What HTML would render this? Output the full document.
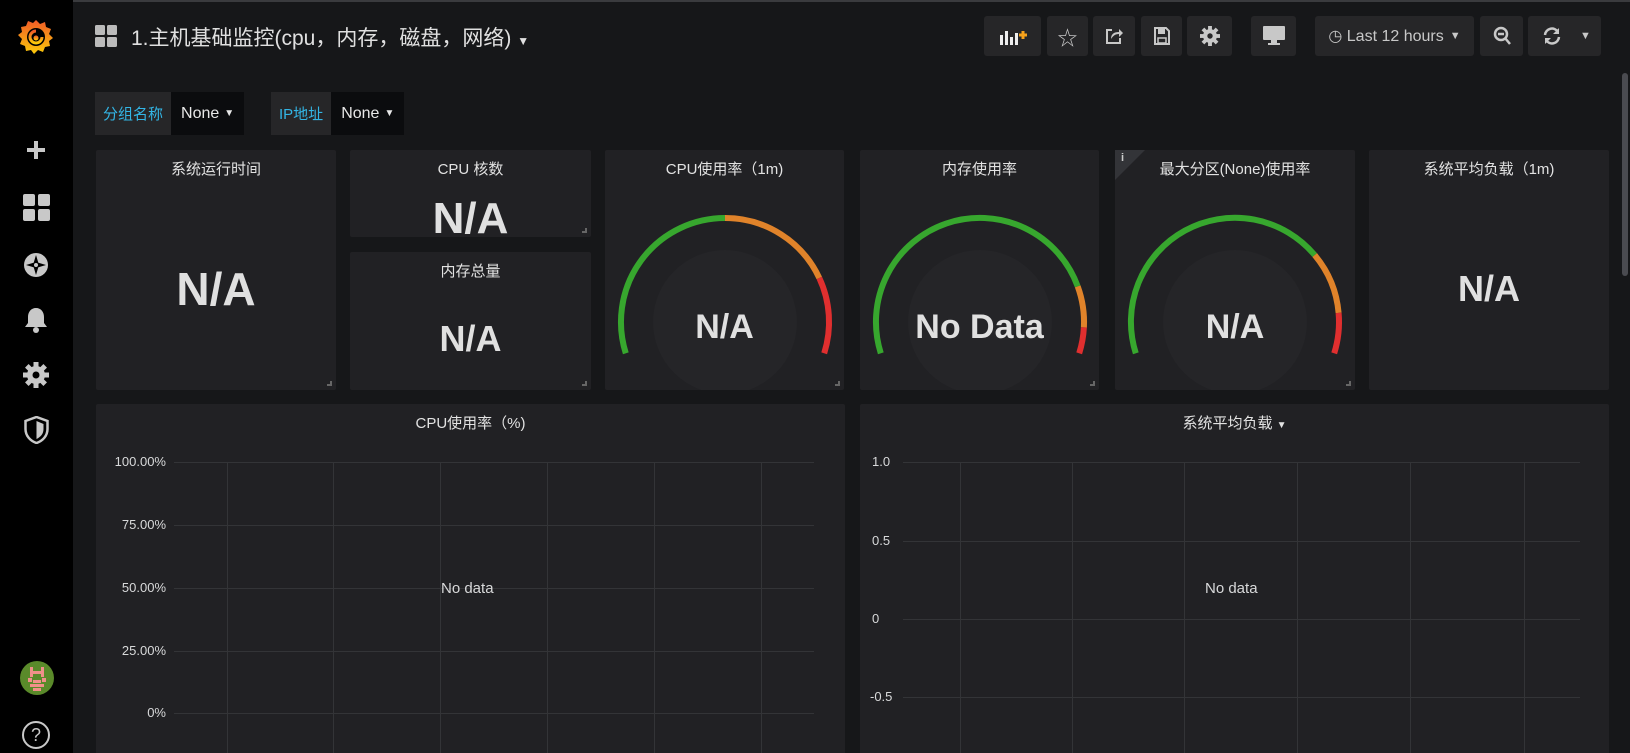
<!DOCTYPE html>
<html><head><meta charset="utf-8"><style>
*{box-sizing:border-box;margin:0;padding:0}
html,body{width:1630px;height:753px;overflow:hidden;background:#161719}
body{font-family:"Liberation Sans","Noto Sans CJK SC",sans-serif;color:#d8d9da;position:relative}
.abs{position:absolute}
.side{left:0;top:0;width:73px;height:753px;background:#000}
.btn{position:absolute;top:16px;height:40px;background:#262628;border-radius:3px;display:flex;align-items:center;justify-content:center;color:#c8c8c8;font-size:15px}
.panel{position:absolute;background:#212124;border-radius:2px}
.pt{position:absolute;left:0;right:0;top:8px;text-align:center;font-size:15px;color:#e2e2e2}
.big{position:absolute;left:0;right:0;text-align:center;font-weight:bold;color:#e0e0e0}
.corner{position:absolute;right:4px;bottom:4px;width:5px;height:5px;border-right:2px solid #666;border-bottom:2px solid #666}
.yl{position:absolute;font-size:13px;color:#d8d9da;text-align:right}
.hl{position:absolute;height:1px;background:#333437}
.vl{position:absolute;width:1px;background:#333437}
.var{position:absolute;top:92px;height:43px;display:flex;font-size:15px}
.var .l{background:#262628;color:#33b5e5;display:flex;align-items:center;padding:0 8px}
.var .v{background:#0b0c0e;color:#e8e8e8;display:flex;align-items:center;padding:0 10px;font-size:16px}
</style></head><body>
<div class="abs" style="left:0;top:0;width:1630px;height:2px;background:#3a3b3e"></div>
<div class="abs side">
 <svg class="abs" style="left:16px;top:17px" width="40" height="40" viewBox="0 0 40 40"><defs><linearGradient id="g" x1="0" y1="1" x2="0" y2="0"><stop offset="0" stop-color="#fbca0a"/><stop offset="1" stop-color="#f05a28"/></linearGradient></defs><path d="M20 3l4 4 5-2 1 5 5 2-2 5 4 4-4 3 1 5-5 1-2 5-5-2-4 4-3-4-5 1-1-5-5-2 2-5-4-4 4-3-1-5 5-1 2-5 5 2z" fill="url(#g)"/><circle cx="20" cy="20" r="9" fill="#000"/><path d="M20 14a6 6 0 1 0 6 6" stroke="url(#g)" stroke-width="3" fill="none"/><circle cx="20" cy="21" r="2.5" fill="url(#g)"/></svg>
 <div class="abs" style="left:26px;top:140px;width:20px;height:20px"><div class="abs" style="left:8px;top:1px;width:4px;height:18px;background:#c8c8c8"></div><div class="abs" style="left:1px;top:8px;width:18px;height:4px;background:#c8c8c8"></div></div>
 <svg class="abs" style="left:23px;top:194px" width="27" height="27"><rect x="0" y="0" width="12" height="12" rx="2" fill="#c8c8c8"/><rect x="15" y="0" width="12" height="12" rx="2" fill="#c8c8c8"/><rect x="0" y="15" width="12" height="12" rx="2" fill="#c8c8c8"/><rect x="15" y="15" width="12" height="12" rx="2" fill="#c8c8c8"/></svg>
 <svg class="abs" style="left:23px;top:252px" width="26" height="26"><circle cx="13" cy="13" r="12" fill="#c8c8c8"/><path d="M13 3l3 10-3 10-3-10z M3 13l10-3 10 3-10 3z" fill="#000"/><circle cx="13" cy="13" r="2" fill="#c8c8c8"/></svg>
 <svg class="abs" style="left:24px;top:306px" width="24" height="28"><path d="M12 2c-5 0-8 4-8 9v6l-3 4h22l-3-4v-6c0-5-3-9-8-9z" fill="#c8c8c8"/><circle cx="12" cy="24" r="3" fill="#c8c8c8"/></svg>
 <svg class="abs" style="left:23px;top:362px" width="26" height="26" viewBox="0 0 26 26"><g fill="#c8c8c8"><circle cx="13" cy="13" r="9"/><rect x="10.5" y="0" width="5" height="26"/><rect x="0" y="10.5" width="26" height="5"/><rect x="10.5" y="0" width="5" height="26" transform="rotate(45 13 13)"/><rect x="10.5" y="0" width="5" height="26" transform="rotate(-45 13 13)"/></g><circle cx="13" cy="13" r="3.5" fill="#000"/></svg>
 <svg class="abs" style="left:24px;top:416px" width="25" height="28"><path d="M12.5 1l11 4v8c0 7-5 12-11 14C6.5 25 1.5 20 1.5 13V5z" fill="none" stroke="#c8c8c8" stroke-width="2.5"/><path d="M12.5 5l7 3v5c0 5-3 8-7 10z" fill="#c8c8c8"/></svg>
 <svg class="abs" style="left:20px;top:661px" width="34" height="34" viewBox="0 0 34 34"><circle cx="17" cy="17" r="17" fill="#5a8a2a"/><g fill="#f0908a"><rect x="10" y="6" width="3" height="10"/><rect x="21" y="6" width="3" height="10"/><rect x="13" y="10" width="8" height="3"/><rect x="8" y="17" width="4" height="4"/><rect x="22" y="17" width="4" height="4"/><rect x="13" y="19" width="8" height="3"/><rect x="10" y="23" width="14" height="3"/><rect x="13" y="27" width="8" height="3"/></g></svg>
 <div class="abs" style="left:22px;top:721px;width:28px;height:28px;border:2px solid #c8c8c8;border-radius:50%;text-align:center;font-size:18px;line-height:24px;color:#c8c8c8">?</div>
</div>
<svg class="abs" style="left:95px;top:25px" width="23" height="23"><rect x="0" y="0" width="10" height="10" rx="1.5" fill="#bbb"/><rect x="12" y="0" width="10" height="10" rx="1.5" fill="#bbb"/><rect x="0" y="12" width="10" height="10" rx="1.5" fill="#bbb"/><rect x="12" y="12" width="10" height="10" rx="1.5" fill="#bbb"/></svg>
<div class="abs" style="left:131px;top:22px;font-size:21px;color:#e0e0e0;white-space:nowrap">1.主机基础监控(cpu，内存，磁盘，网络) <span style="font-size:12px">▼</span></div>

<div class="btn" style="left:984px;width:57px"><svg width="30" height="18"><rect x="2" y="8" width="3" height="10" fill="#eee"/><rect x="7" y="4" width="3" height="14" fill="#eee"/><rect x="12" y="10" width="3" height="8" fill="#eee"/><rect x="17" y="6" width="3" height="12" fill="#eee"/><path d="M21 8h8M25 4v8" stroke="#f7a21b" stroke-width="3"/></svg></div>
<div class="btn" style="left:1047px;width:41px;font-size:20px">☆</div>
<div class="btn" style="left:1093px;width:42px"><svg width="18" height="18"><path d="M7 3H2v13h13v-5" stroke="#c8c8c8" stroke-width="2" fill="none"/><path d="M6 12c0-5 3-7 8-7V2l4 4-4 4V7c-4 0-6 2-8 5z" fill="#c8c8c8"/></svg></div>
<div class="btn" style="left:1141px;width:41px"><svg width="16" height="18"><path d="M1 1h11l3 3v13H1z" stroke="#c8c8c8" stroke-width="2" fill="none"/><rect x="4" y="2" width="7" height="5" fill="#c8c8c8"/><rect x="4" y="11" width="8" height="5" fill="none" stroke="#c8c8c8" stroke-width="1.5"/></svg></div>
<div class="btn" style="left:1187px;width:45px"><svg width="20" height="20" viewBox="0 0 26 26"><g fill="#c8c8c8"><circle cx="13" cy="13" r="9"/><rect x="10.5" y="0" width="5" height="26"/><rect x="0" y="10.5" width="26" height="5"/><rect x="10.5" y="0" width="5" height="26" transform="rotate(45 13 13)"/><rect x="10.5" y="0" width="5" height="26" transform="rotate(-45 13 13)"/></g><circle cx="13" cy="13" r="3.5" fill="#262628"/></svg></div>
<div class="btn" style="left:1251px;width:45px"><svg width="22" height="20"><rect x="0" y="0" width="22" height="14" rx="1" fill="#c8c8c8"/><rect x="8" y="14" width="6" height="3" fill="#c8c8c8"/><rect x="5" y="17" width="12" height="2" fill="#c8c8c8"/></svg></div>
<div class="btn" style="left:1315px;width:159px;font-size:16px">◷ Last 12 hours <span style="font-size:11px;margin-left:6px">▼</span></div>
<div class="btn" style="left:1480px;width:43px"><svg width="18" height="20"><circle cx="8" cy="8" r="6" stroke="#c8c8c8" stroke-width="2.5" fill="none"/><path d="M5 8h6M12 12l5 6" stroke="#c8c8c8" stroke-width="2.5"/></svg></div>
<div class="btn" style="left:1528px;width:73px;justify-content:flex-start;padding-left:14px"><svg width="20" height="18"><path d="M3 8a7 7 0 0 1 13-3M17 10a7 7 0 0 1-13 3" stroke="#c8c8c8" stroke-width="2.5" fill="none"/><path d="M17 1v6h-6zM3 17v-6h6z" fill="#c8c8c8"/></svg><span style="font-size:11px;margin-left:18px">▼</span></div>
<div class="abs" style="left:1622px;top:73px;width:6px;height:203px;background:#4a4b50;border-radius:3px"></div>

<div class="var" style="left:95px"><div class="l">分组名称</div><div class="v">None <span style="font-size:10px;margin-left:5px">▼</span></div></div>
<div class="var" style="left:271px"><div class="l">IP地址</div><div class="v">None <span style="font-size:10px;margin-left:5px">▼</span></div></div>

<div class="panel" style="left:96px;top:150px;width:240px;height:240px"><div class="pt">系统运行时间</div><div class="big" style="top:112px;font-size:46px">N/A</div><div class="corner"></div></div>
<div class="panel" style="left:350px;top:150px;width:241px;height:87px"><div class="pt">CPU 核数</div><div class="big" style="top:44px;font-size:44px">N/A</div><div class="corner"></div></div>
<div class="panel" style="left:350px;top:252px;width:241px;height:138px"><div class="pt">内存总量</div><div class="big" style="top:66px;font-size:36px">N/A</div><div class="corner"></div></div>

<div class="panel" style="left:605px;top:150px;width:239px;height:240px"><div class="pt">CPU使用率（1m)</div>
<svg class="abs" style="left:0;top:0" width="239" height="240"><circle cx="120" cy="172" r="72" fill="#252528"/><g fill="none" stroke-width="6"><path d="M20.8 203.3A104 104 0 0 1 120 68" stroke="#37a72e"/><path d="M120 68A104 104 0 0 1 214.3 128" stroke="#e0832a"/><path d="M214.3 128A104 104 0 0 1 219.2 203.3" stroke="#e02f2f"/></g></svg>
<div class="big" style="top:158px;font-size:34px">N/A</div><div class="corner"></div></div>

<div class="panel" style="left:860px;top:150px;width:239px;height:240px"><div class="pt">内存使用率</div>
<svg class="abs" style="left:0;top:0" width="239" height="240"><circle cx="120" cy="172" r="72" fill="#252528"/><g fill="none" stroke-width="6"><path d="M20.8 203.3A104 104 0 0 1 217.7 136.4" stroke="#37a72e"/><path d="M217.7 136.4A104 104 0 0 1 223.9 177.4" stroke="#e0832a"/><path d="M223.9 177.4A104 104 0 0 1 219.2 203.3" stroke="#e02f2f"/></g></svg>
<div class="big" style="top:158px;font-size:34px">No Data</div><div class="corner"></div></div>

<div class="panel" style="left:1115px;top:150px;width:240px;height:240px"><svg class="abs" style="left:0;top:0" width="30" height="30"><path d="M0 0h30L0 30z" fill="#333438"/></svg><div class="abs" style="left:6px;top:2px;font-size:11px;font-weight:bold;color:#ccc">i</div><div class="pt">最大分区(None)使用率</div>
<svg class="abs" style="left:0;top:0" width="240" height="240"><circle cx="120" cy="172" r="72" fill="#252528"/><g fill="none" stroke-width="6"><path d="M20.8 203.3A104 104 0 0 1 199.7 105.1" stroke="#37a72e"/><path d="M199.7 105.1A104 104 0 0 1 223.6 162.9" stroke="#e0832a"/><path d="M223.6 162.9A104 104 0 0 1 219.2 203.3" stroke="#e02f2f"/></g></svg>
<div class="big" style="top:158px;font-size:34px">N/A</div><div class="corner"></div></div>

<div class="panel" style="left:1369px;top:150px;width:240px;height:240px"><div class="pt">系统平均负载（1m)</div><div class="big" style="top:118px;font-size:36px">N/A</div></div>

<div class="panel" style="left:96px;top:404px;width:749px;height:360px"><div class="pt">CPU使用率（%)</div></div>
<div class="panel" style="left:860px;top:404px;width:749px;height:360px"><div class="pt">系统平均负载 <span style="font-size:10px">▼</span></div></div>

<div class="hl" style="left:174px;width:640px;top:462px"></div>
<div class="hl" style="left:174px;width:640px;top:525px"></div>
<div class="hl" style="left:174px;width:640px;top:588px"></div>
<div class="hl" style="left:174px;width:640px;top:651px"></div>
<div class="hl" style="left:174px;width:640px;top:713px"></div>
<div class="vl" style="left:227px;top:462px;height:291px"></div><div class="vl" style="left:333px;top:462px;height:291px"></div><div class="vl" style="left:440px;top:462px;height:291px"></div><div class="vl" style="left:547px;top:462px;height:291px"></div><div class="vl" style="left:654px;top:462px;height:291px"></div><div class="vl" style="left:761px;top:462px;height:291px"></div>
<div class="yl" style="left:100px;width:66px;top:454px">100.00%</div>
<div class="yl" style="left:100px;width:66px;top:517px">75.00%</div>
<div class="yl" style="left:100px;width:66px;top:580px">50.00%</div>
<div class="yl" style="left:100px;width:66px;top:643px">25.00%</div>
<div class="yl" style="left:100px;width:66px;top:705px">0%</div>
<div class="abs" style="left:441px;top:580px;font-size:15px">No data</div>

<div class="hl" style="left:903px;width:677px;top:462px"></div>
<div class="hl" style="left:903px;width:677px;top:541px"></div>
<div class="hl" style="left:903px;width:677px;top:619px"></div>
<div class="hl" style="left:903px;width:677px;top:697px"></div>
<div class="vl" style="left:960px;top:462px;height:291px"></div><div class="vl" style="left:1072px;top:462px;height:291px"></div><div class="vl" style="left:1184px;top:462px;height:291px"></div><div class="vl" style="left:1297px;top:462px;height:291px"></div><div class="vl" style="left:1410px;top:462px;height:291px"></div><div class="vl" style="left:1524px;top:462px;height:291px"></div>
<div class="yl" style="left:860px;top:454px;text-align:left;padding-left:12px;width:60px">1.0</div>
<div class="yl" style="left:860px;top:533px;text-align:left;padding-left:12px;width:60px">0.5</div>
<div class="yl" style="left:860px;top:611px;text-align:left;padding-left:12px;width:60px">0</div>
<div class="yl" style="left:860px;top:689px;text-align:left;padding-left:10px;width:60px">-0.5</div>
<div class="abs" style="left:1205px;top:580px;font-size:15px">No data</div>
</body></html>
